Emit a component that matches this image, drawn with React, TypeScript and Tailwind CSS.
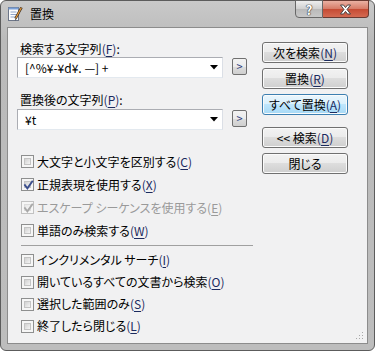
import React from 'react'

function Key({ k, disabled }: { k: string; disabled?: boolean }) {
    return (
        <span className={disabled ? 'text-[#9a9a9a]' : 'text-[#1b2a5e]'}>
            (<span className="underline underline-offset-2">{k}</span>)
        </span>
    )
}

function CheckMark({ disabled }: { disabled?: boolean }) {
    return (
        <svg className="absolute left-[1px] top-[1px]" width="11" height="11" viewBox="0 0 11 11">
            <path d="M2 5.2 L4.4 8.4 L9.2 1.6" fill="none" stroke={disabled ? '#a8a8a8' : '#3a4d8c'} strokeWidth="1.9" strokeLinecap="square" />
        </svg>
    )
}

function Check({ label, k, checked, disabled }: { label: string; k: string; checked?: boolean; disabled?: boolean }) {
    return (
        <div className="flex h-[23px] items-center">
            <div className={`relative ml-[4px] h-[13px] w-[13px] shrink-0 border bg-[#f6f6f6] p-[2px] ${disabled ? 'border-[#c2c2c2]' : 'border-[#8e8f8f]'}`}>
                <div className={`h-full w-full border bg-gradient-to-br ${disabled ? 'border-[#dcdcdc] from-[#e8e8e8] to-[#f6f6f6]' : 'border-[#c4c4c4] from-[#d2d2d2] to-[#f4f4f4]'}`} />
                {checked && <CheckMark disabled={disabled} />}
            </div>
            <span className={`ml-[3px] whitespace-nowrap leading-[16px] ${disabled ? 'text-[#9a9a9a]' : 'text-black'}`}>
                {label}<Key k={k} disabled={disabled} />
            </span>
        </div>
    )
}

function Combo({ value }: { value: string }) {
    return (
        <div className="flex items-start">
            <div className="flex h-[21px] w-[206px] items-center border border-[#abadb3] border-b-[#e3e9ef] border-r-[#dbdfe6] bg-white pl-[7px] pr-[4px]">
                <span className="flex-1 whitespace-nowrap leading-[16px] text-black">{value}</span>
                <svg width="8" height="5" viewBox="0 0 8 5">
                    <path d="M0 0 H8 L4 4.5 Z" fill="#000" />
                </svg>
            </div>
            <div className="ml-[9px] mt-[1px] flex h-[17px] w-[15px] items-center justify-center rounded-[2px] border border-[#707070] bg-[linear-gradient(to_bottom,#f2f2f2_0%,#ebebeb_50%,#dddddd_50%,#cfcfcf_100%)] text-[11px] leading-none text-[#2b3a7a]">
                &gt;
            </div>
        </div>
    )
}

function Btn({ children, focused, className = '' }: { children: React.ReactNode; focused?: boolean; className?: string }) {
    return (
        <div className={`flex h-[21px] w-[86px] items-center justify-center rounded-[3px] border leading-[16px] text-black shadow-[inset_0_0_0_1px_#fbfbfb] ${focused ? 'border-[#3c7fb1] bg-[linear-gradient(to_bottom,#eaf6fd_0%,#d9f0fc_50%,#bee6fd_50%,#a7d9f5_100%)]' : 'border-[#707070] bg-[linear-gradient(to_bottom,#f2f2f2_0%,#ebebeb_50%,#dddddd_50%,#cfcfcf_100%)]'} ${className}`}>
            {children}
        </div>
    )
}

function TitleIcon() {
    return (
        <svg width="16" height="16" viewBox="0 0 16 16">
            <rect x="1.5" y="1.5" width="10" height="13" fill="#fdfdfd" stroke="#6d7688" />
            <rect x="1.5" y="1.5" width="10" height="2" fill="#7aa0d8" />
            <path d="M3.5 6 H9.5 M3.5 8.5 H9.5 M3.5 11 H8" stroke="#8fa4c8" />
            <path d="M14.5 1.5 L8.5 12.5" stroke="#3a2a1a" strokeWidth="2.6" />
            <path d="M14.3 1.8 L8.7 12.2" stroke="#e89a3a" strokeWidth="1.2" />
            <path d="M8.6 12.4 L7.8 14.8 L9.6 13" fill="#222" />
        </svg>
    )
}

export default function App() {
    return (
        <div className="h-[351px] w-[375px] overflow-hidden bg-white text-[12px] [font-family:'Noto_Sans_CJK_JP','Noto_Sans',sans-serif] [font-feature-settings:'palt']">
            <div className="flex h-[351px] w-[375px] flex-col rounded-[6px] border border-[#5c5c5c] bg-[linear-gradient(to_bottom,#c9c9c9,#bababa_40px,#bdbdbd)] px-[6px] pb-[6px]">
                {/* title bar */}
                <div className="flex h-[26px] shrink-0">
                    <div className="flex items-center pb-[1px]">
                        <TitleIcon />
                        <span className="ml-[7px] text-[12px] leading-[16px] text-black">置換</span>
                    </div>
                    <div className="flex-1" />
                    <div className="-mr-[1px] -mt-[1px] flex self-start">
                        <div className="flex h-[18px] w-[28px] items-center justify-center rounded-bl-[4px] border border-[#686868] bg-[linear-gradient(to_bottom,#eeeeee,#cfcfcf_50%,#b9b9b9_50%,#c8c8c8)] text-[13px] font-bold leading-none text-white [text-shadow:0_0_1px_#333,0_0_1px_#333,0_0_1px_#333]">
                            ?
                        </div>
                        <div className="flex h-[18px] w-[46px] items-center justify-center rounded-br-[4px] border border-l-0 border-[#6a3a32] bg-[linear-gradient(to_bottom,#eab1a3,#d67a66_50%,#c54a33_50%,#d46a52)]">
                            <svg width="13" height="11" viewBox="0 0 13 11">
                                <path d="M1.5 1 H4.5 L6.5 3.6 L8.5 1 H11.5 L8 5.5 L11.5 10 H8.5 L6.5 7.4 L4.5 10 H1.5 L5 5.5 Z" fill="#fff" stroke="#3a3a3a" strokeWidth="0.9" strokeLinejoin="round" />
                            </svg>
                        </div>
                    </div>
                </div>

                {/* client */}
                <div className="relative flex flex-1 border border-[#8c8c8c] bg-[#f1f1f2] pl-[9px]">
                    <div className="flex w-[236px] flex-col pt-[13px]">
                        <div className="ml-[3px] leading-[16px]">検索する文字列<Key k="F" />:</div>
                        <Combo value="[^%¥-¥d¥. —] +" />
                        <div className="ml-[3px] mt-[14px] leading-[16px]">置換後の文字列<Key k="P" />:</div>
                        <div className="mt-[1px]">
                            <Combo value="¥t" />
                        </div>

                        <div className="mt-[20px]">
                            <Check label="大文字と小文字を区別する" k="C" />
                            <Check label="正規表現を使用する" k="X" checked />
                            <Check label="エスケープ シーケンスを使用する" k="E" checked disabled />
                            <Check label="単語のみ検索する" k="W" />
                        </div>

                        <div className="ml-[4px] mt-[3px] h-px w-[232px] bg-[#a0a0a0]" />

                        <div className="mt-[3px] [&>div]:h-[22px]">
                            <Check label="インクリメンタル サーチ" k="I" />
                            <Check label="開いているすべての文書から検索" k="O" />
                            <Check label="選択した範囲のみ" k="S" />
                            <Check label="終了したら閉じる" k="L" />
                        </div>
                    </div>

                    <div className="ml-[9px] flex flex-col pt-[14px]">
                        <Btn>次を検索<Key k="N" /></Btn>
                        <Btn className="mt-[5px]">置換<Key k="R" /></Btn>
                        <Btn className="mt-[5px]" focused>すべて置換<Key k="A" /></Btn>
                        <Btn className="mt-[12px]">&lt;&lt; 検索<Key k="D" /></Btn>
                        <Btn className="mt-[5px]">閉じる</Btn>
                    </div>

                    {/* size grip */}
                    <svg className="absolute bottom-[3px] right-[3px]" width="8" height="8" viewBox="0 0 8 8">
                        <rect x="6" y="0" width="1" height="1" fill="#a8a8a8" />
                        <rect x="3" y="3" width="1" height="1" fill="#a8a8a8" />
                        <rect x="6" y="3" width="1" height="1" fill="#a8a8a8" />
                        <rect x="0" y="6" width="1" height="1" fill="#a8a8a8" />
                        <rect x="3" y="6" width="1" height="1" fill="#a8a8a8" />
                        <rect x="6" y="6" width="1" height="1" fill="#a8a8a8" />
                    </svg>
                </div>
            </div>
        </div>
    )
}
